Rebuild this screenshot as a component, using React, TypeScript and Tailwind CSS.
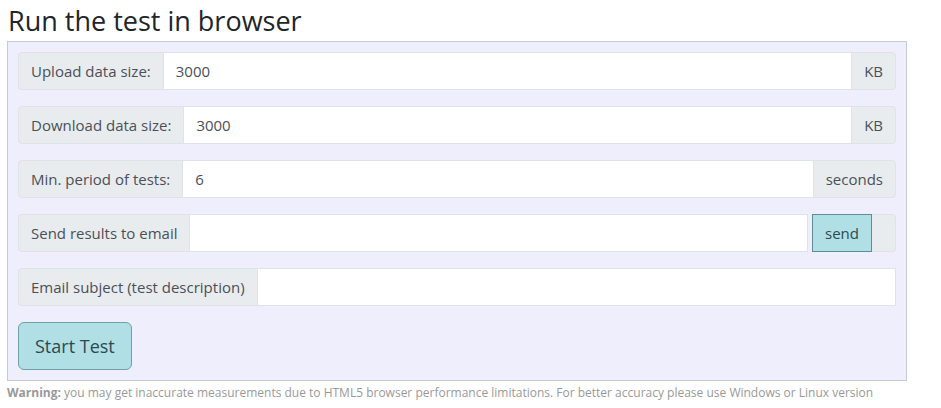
import React from 'react';

const font = { fontFamily: '"Open Sans", "Noto Sans", sans-serif' };

function Row({ label, value, unit }: { label: string; value?: string; unit?: string }) {
  return (
    <div className="flex h-[38px] mb-4">
      <div className="flex items-center px-3 bg-[#e9ecef] border border-[#dfe2e6] rounded-l text-[#495057] whitespace-nowrap">
        {label}
      </div>
      <div className="flex-1 flex items-center px-3 bg-white border-y border-[#dfe2e6] text-[#495057]">
        {value}
      </div>
      {unit ? (
        <div className="flex items-center px-3 bg-[#e9ecef] border border-[#dfe2e6] rounded-r text-[#495057]">
          {unit}
        </div>
      ) : (
        <div className="border-r border-[#dfe2e6] rounded-r" />
      )}
    </div>
  );
}

export default function App() {
  return (
    <div className="bg-white w-[941px] h-[408px] pl-[7px] text-[15px]" style={font}>
      <h1 className="text-[27px] leading-[41px] text-[#212529] pl-px">Run the test in browser</h1>
      <div className="w-[900px] bg-[#efeefc] border border-[#c9c9d3] px-[10px] pt-[10px] pb-[10px]">
        <Row label="Upload data size:" value="3000" unit="KB" />
        <Row label="Download data size:" value="3000" unit="KB" />
        <Row label="Min. period of tests:" value="6" unit="seconds" />
        <div className="flex h-[38px] mb-4">
          <div className="flex items-center px-3 bg-[#e9ecef] border border-[#dfe2e6] rounded-l text-[#495057] whitespace-nowrap">
            Send results to email
          </div>
          <div className="flex-1 bg-white border-y border-r border-[#dfe2e6]" />
          <div className="flex pl-1 w-[88px] h-full">
            <button className="w-[60px] h-full bg-[#b0e0e6] border border-[#5f8d93] text-[#2c4a4e]">send</button>
            <div className="flex-1 bg-[#e9ecef] border-y border-r border-[#dfe2e6] rounded-r" />
          </div>
        </div>
        <Row label="Email subject (test description)" />
        <button className="h-[48px] px-4 bg-[#b0e0e6] border border-[#6fa1a7] rounded-md text-[18px] text-[#2c4a4e]">
          Start Test
        </button>
      </div>
      <p className="text-[12px] text-[#999999] mt-[3px]">
        <b>Warning:</b> you may get inaccurate measurements due to HTML5 browser performance limitations. For better accuracy please use Windows or Linux version
      </p>
    </div>
  );
}
